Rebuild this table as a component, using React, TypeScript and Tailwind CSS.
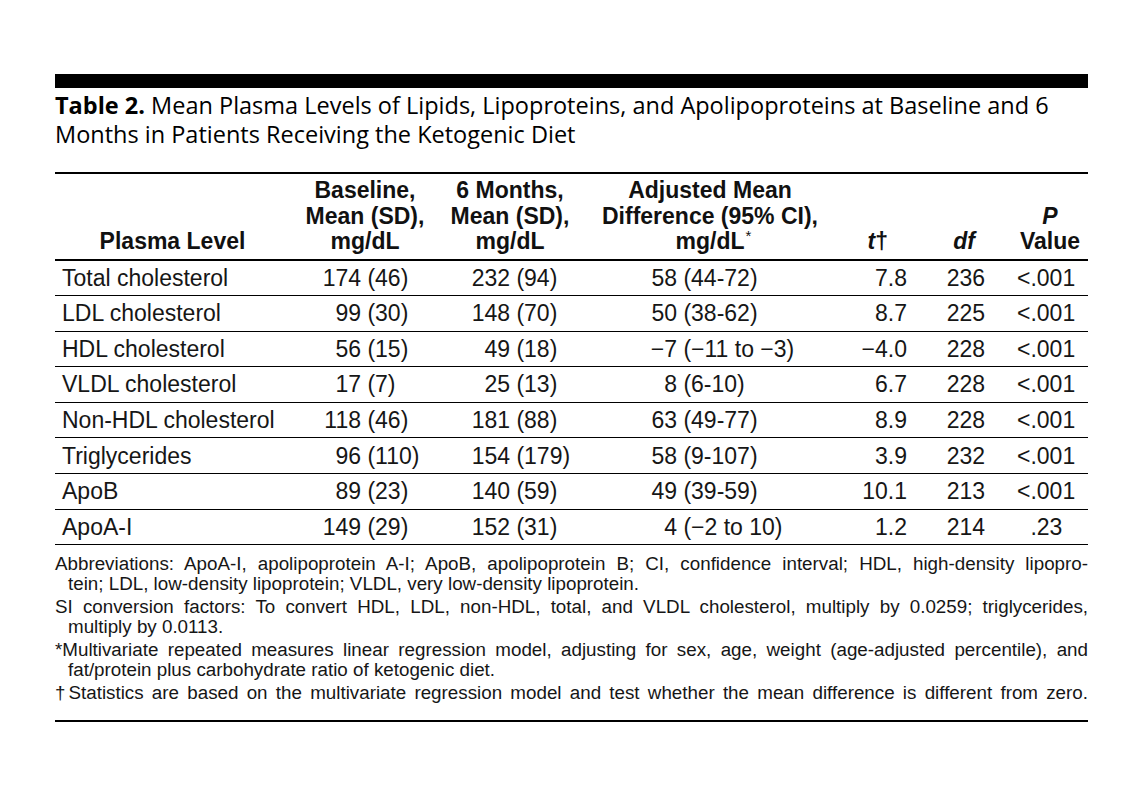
import React from "react";

type Pair = [string, string];

type Row = {
  name: string;
  base: Pair;
  six: Pair;
  diff: Pair;
  t: string;
  df: string;
  p: string;
};

const rows: Row[] = [
  { name: "Total cholesterol", base: ["174", "(46)"], six: ["232", "(94)"], diff: ["58", "(44-72)"], t: "7.8", df: "236", p: "<.001" },
  { name: "LDL cholesterol", base: ["99", "(30)"], six: ["148", "(70)"], diff: ["50", "(38-62)"], t: "8.7", df: "225", p: "<.001" },
  { name: "HDL cholesterol", base: ["56", "(15)"], six: ["49", "(18)"], diff: ["\u22127", "(\u221211 to \u22123)"], t: "\u22124.0", df: "228", p: "<.001" },
  { name: "VLDL cholesterol", base: ["17", "(7)"], six: ["25", "(13)"], diff: ["8", "(6-10)"], t: "6.7", df: "228", p: "<.001" },
  { name: "Non-HDL cholesterol", base: ["118", "(46)"], six: ["181", "(88)"], diff: ["63", "(49-77)"], t: "8.9", df: "228", p: "<.001" },
  { name: "Triglycerides", base: ["96", "(110)"], six: ["154", "(179)"], diff: ["58", "(9-107)"], t: "3.9", df: "232", p: "<.001" },
  { name: "ApoB", base: ["89", "(23)"], six: ["140", "(59)"], diff: ["49", "(39-59)"], t: "10.1", df: "213", p: "<.001" },
  { name: "ApoA-I", base: ["149", "(29)"], six: ["152", "(31)"], diff: ["4", "(\u22122 to 10)"], t: "1.2", df: "214", p: ".23" },
];

const cols = "grid grid-cols-[235px_150px_140px_260px_70px_80px_98px]";

// number right-aligned in a fixed box, the bracket part hangs left-aligned after it
function Val({ v, pad }: { v: Pair; pad: string }) {
  return (
    <div className={`whitespace-nowrap ${pad}`}>
      <span className="inline-block w-[39px] text-right">{v[0]}</span> {v[1]}
    </div>
  );
}

function PValue({ p }: { p: string }) {
  if (p.startsWith("<")) return <div className="pl-[27px]">&lt;{p.slice(1)}</div>;
  return (
    <div className="pl-[27px]">
      <span className="invisible">&lt;</span>
      {p}
    </div>
  );
}

export default function App() {
  return (
    <div className="min-h-[798px] bg-white text-[#161616]">
      <div className="ml-[55px] w-[1033px] pt-[74px]">
        <div className="h-[14px] bg-black" />

        <h1 className="mt-[3px] whitespace-nowrap text-[23.5px] leading-[29px] text-black font-['Open_Sans',sans-serif]">
          <span className="font-bold">Table 2.</span> Mean Plasma Levels of Lipids, Lipoproteins, and
          Apolipoproteins at Baseline and 6
          <br />
          Months in Patients Receiving the Ketogenic Diet
        </h1>

        <div className="mt-[23px] border-t-2 border-black font-['Liberation_Sans',Arial,sans-serif] text-[23px]">
          <div className={`${cols} items-end border-b-2 border-black pt-[4px] pb-[4px] font-bold leading-[25.5px] text-[#111]`}>
            <div className="text-center">Plasma Level</div>
            <div className="text-center">
              Baseline,
              <br />
              Mean (SD),
              <br />
              mg/dL
            </div>
            <div className="text-center">
              6 Months,
              <br />
              Mean (SD),
              <br />
              mg/dL
            </div>
            <div className="text-center">
              Adjusted Mean
              <br />
              Difference (95% CI),
              <br />
              <span className="relative">
                mg/dL
                <span className="absolute left-full top-[-5px] ml-[1px] text-[15px] font-normal">*</span>
              </span>
            </div>
            <div className="pr-[22px] text-right italic">
              t<span className="not-italic">†</span>
            </div>
            <div className="pr-[15px] text-right italic">df</div>
            <div className="pr-[8px] text-right">
              <div className="inline-block text-center">
                <span className="italic">P</span>
                <br />
                Value
              </div>
            </div>
          </div>

          {rows.map((r) => (
            <div key={r.name} className={`${cols} h-[35.6px] items-center border-b-[1.6px] border-black`}>
              <div className="pl-[7px] whitespace-nowrap">{r.name}</div>
              <Val v={r.base} pad="pl-[32px]" />
              <Val v={r.six} pad="pl-[31px]" />
              <Val v={r.diff} pad="pl-[58px]" />
              <div className="pr-[3px] text-right">{r.t}</div>
              <div className="pr-[5px] text-right">{r.df}</div>
              <PValue p={r.p} />
            </div>
          ))}

          <div className="border-b-2 border-black pt-[9px] pb-[17px] text-[18.8px] leading-[20px]">
            <div className="whitespace-nowrap text-justify [text-align-last:justify]">
              Abbreviations: ApoA-I, apolipoprotein A-I; ApoB, apolipoprotein B; CI, confidence interval; HDL, high-density lipopro-
            </div>
            <div className="pl-[13px]">tein; LDL, low-density lipoprotein; VLDL, very low-density lipoprotein.</div>
            <div className="mt-[3px] whitespace-nowrap text-justify [text-align-last:justify]">
              SI conversion factors: To convert HDL, LDL, non-HDL, total, and VLDL cholesterol, multiply by 0.0259; triglycerides,
            </div>
            <div className="pl-[13px]">multiply by 0.0113.</div>
            <div className="mt-[3px] whitespace-nowrap text-justify [text-align-last:justify]">
              *Multivariate repeated measures linear regression model, adjusting for sex, age, weight (age-adjusted percentile), and
            </div>
            <div className="pl-[13px]">fat/protein plus carbohydrate ratio of ketogenic diet.</div>
            <div className="mt-[3px] whitespace-nowrap text-justify [text-align-last:justify]">
              †Statistics are based on the multivariate regression model and test whether the mean difference is different from zero.
            </div>
          </div>
        </div>
      </div>
    </div>
  );
}
